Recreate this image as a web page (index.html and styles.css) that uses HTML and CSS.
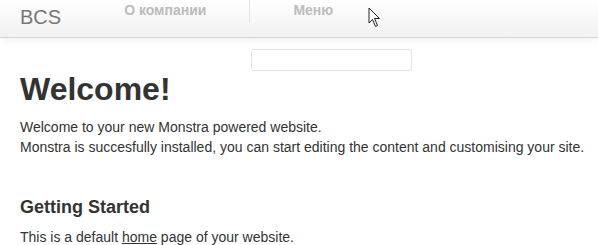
FILE: index.html
```html
<!DOCTYPE html>
<html lang="ru">
<head>
    <meta charset="UTF-8">
    <meta name="viewport" content="width=device-width, initial-scale=1.0">
    <title>BCS</title>
    <link rel="stylesheet" href="styles.css">
</head>
<body>

    <!-- Верхнее меню -->
    <header class="navbar">
        <a class="brand" href="#">BCS</a>
        <ul class="nav">
            <li><a href="#">О компании</a></li>
            <li class="divider"></li>
            <li><a href="#">Меню</a></li>
        </ul>
    </header>

    <!-- Поиск -->
    <div class="search-row">
        <div class="search-box"></div>
    </div>

    <!-- Контент -->
    <main class="content">
        <h1>Welcome!</h1>
        <p>Welcome to your new Monstra powered website.<br>
        Monstra is succesfully installed, you can start editing the content and customising your site.</p>

        <h3>Getting Started</h3>
        <p>This is a default <a href="#">home</a> page of your website.</p>
    </main>

    <!-- Курсор -->
    <svg class="cursor" width="14" height="21" viewBox="0 0 14 21">
        <path d="M1 1 L1 16 L4.5 12.5 L7.5 19.5 L9.5 18.5 L6.5 11.5 L11.5 11.5 Z" fill="#fff" stroke="#222" stroke-width="1" stroke-linejoin="miter"/>
    </svg>

</body>
</html>
```

FILE: styles.css
```css
body {
    margin: 0;
    font-family: "Liberation Sans", Arial, sans-serif;
    font-size: 14px;
    line-height: 20px;
    color: #333;
    background: #fff;
    overflow: hidden;
}

/* Верхнее меню */
.navbar {
    display: flex;
    align-items: flex-start;
    height: 37px;
    background: linear-gradient(to bottom, #ffffff 0%, #f1f1f1 100%);
    border-bottom: 1px solid #d6d6d6;
    box-shadow: 0 1px 10px rgba(0, 0, 0, 0.08);
}

.brand {
    padding: 7px 20px 0;
    font-size: 20px;
    line-height: 20px;
    color: #777;
    text-decoration: none;
}

.nav {
    display: flex;
    margin: 0;
    padding: 0;
    list-style: none;
}

.nav a {
    display: block;
    padding: 1px 43px 0 43px;
    font-size: 14px;
    font-weight: bold;
    line-height: 18px;
    color: #bcbcbc;
    text-decoration: none;
}

.nav .divider {
    width: 1px;
    height: 23px;
    background: #e2e2e2;
}

/* Поиск */
.search-row {
    padding: 11px 0 0 251px;
}

.search-box {
    width: 159px;
    height: 20px;
    border: 1px solid #e6e6e6;
    border-radius: 2px;
    background: #fff;
}

/* Контент */
.content {
    padding: 0 0 0 20px;
    white-space: nowrap;
}

h1 {
    margin: 0 0 10px;
    font-size: 32px;
    line-height: 36px;
    font-weight: bold;
    color: #333;
}

p {
    margin: 0 0 10px;
}

h3 {
    margin: 40px 0 10px;
    font-size: 18px;
    line-height: 20px;
    font-weight: bold;
    color: #333;
}

.content a {
    color: #333;
    text-decoration: underline;
}

.cursor {
    position: absolute;
    left: 368px;
    top: 7px;
}
```
